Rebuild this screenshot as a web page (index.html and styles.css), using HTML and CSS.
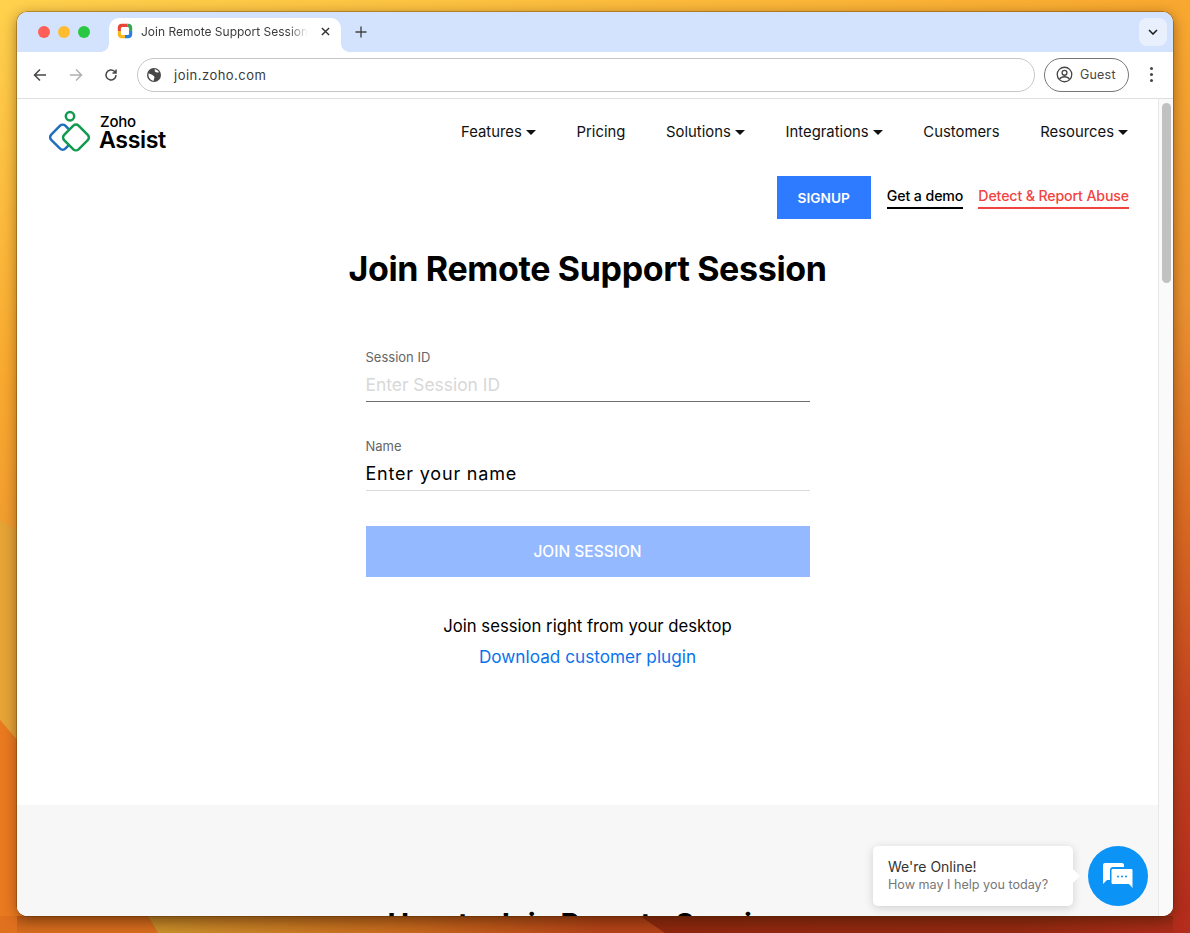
FILE: index.html
```html
<!DOCTYPE html>
<html lang="en">
<head>
<meta charset="utf-8">
<title>Join Remote Support Session</title>
<link rel="stylesheet" href="styles.css">
</head>
<body>
<div class="desktop">
  <svg class="wallpaper" viewBox="0 0 1190 933" preserveAspectRatio="none" aria-hidden="true">
    <defs>
      <linearGradient id="wall" gradientUnits="userSpaceOnUse" x1="0" y1="0" x2="382" y2="1190">
        <stop offset="0" stop-color="#ffd24d"/>
        <stop offset="0.29" stop-color="#f9a92f"/>
        <stop offset="0.52" stop-color="#ea9130"/>
        <stop offset="0.67" stop-color="#dc6e22"/>
        <stop offset="0.825" stop-color="#c4451f"/>
        <stop offset="0.98" stop-color="#b52d1c"/>
      </linearGradient>
      <linearGradient id="gold" gradientUnits="userSpaceOnUse" x1="145" y1="925" x2="600" y2="925">
        <stop offset="0" stop-color="#d2982e"/>
        <stop offset="0.55" stop-color="#d0701f"/>
        <stop offset="1" stop-color="#bb4519"/>
      </linearGradient>
      <linearGradient id="dark" gradientUnits="userSpaceOnUse" x1="640" y1="925" x2="1190" y2="925">
        <stop offset="0" stop-color="#94270f"/>
        <stop offset="0.7" stop-color="#9a2a12"/>
        <stop offset="1" stop-color="#b52d1c"/>
      </linearGradient>
      <linearGradient id="edge" x1="0" y1="0" x2="0" y2="1">
        <stop offset="0" stop-color="#3c1900" stop-opacity=".25"/>
        <stop offset="1" stop-color="#3c1900" stop-opacity=".05"/>
      </linearGradient>
    </defs>
    <rect width="1190" height="933" fill="url(#wall)"/>
    <polygon points="0,520 17,530 17,740 0,720" fill="#e6a437"/>
    <polygon points="0,720 17,740 150,916 0,933" fill="#ea7a20"/>
    <polygon points="0,916 148,916 158,933 0,933" fill="#e0711f"/>
    <polygon points="148,916 640,916 665,933 158,933" fill="url(#gold)"/>
    <polygon points="640,916 1173,916 1190,933 665,933" fill="url(#dark)"/>
    <rect x="17" y="916" width="1156" height="17" fill="url(#edge)"/>
  </svg>
  <div class="window">
    <div class="tabstrip">
      <div class="lights">
        <span class="light light-red"></span>
        <span class="light light-yellow"></span>
        <span class="light light-green"></span>
      </div>
      <div class="tab">
        <svg class="favicon" viewBox="0 0 16 16" aria-hidden="true">
          <path d="M4.6 .8H10.6L10 3.9H5.6C4.6 3.9 3.9 4.6 3.9 5.6V8.6L.8 8V4.6C.8 2.5 2.5 .8 4.6 .8Z" fill="#e8453c"/>
          <path d="M10.6 .8H11.4C13.5 .8 15.2 2.5 15.2 4.6V8L12.1 8.4V5.6C12.1 4.6 11.4 3.9 10.4 3.9H10Z" fill="#34a853"/>
          <path d="M15.2 8V11.4C15.2 13.5 13.5 15.2 11.4 15.2H7.6L8 12.1H10.4C11.4 12.1 12.1 11.4 12.1 10.4V8Z" fill="#2b7de0"/>
          <path d="M.8 8H3.9V10.4C3.9 11.4 4.6 12.1 5.6 12.1H8V15.2H4.6C2.5 15.2 .8 13.5 .8 11.4Z" fill="#f5b81e"/>
        </svg>
        <span class="tab-title">Join Remote Support Session</span>
        <svg class="tab-close" viewBox="0 0 10 10" aria-hidden="true"><path d="M1 1L9 9M9 1L1 9"/></svg>
      </div>
      <svg class="newtab" viewBox="0 0 12 12" aria-hidden="true"><path d="M6 .5V11.5M.5 6H11.5"/></svg>
      <div class="tab-menu">
        <svg viewBox="0 0 10 6" aria-hidden="true"><path d="M1 1L5 5L9 1"/></svg>
      </div>
    </div>
    <div class="toolbar">
      <svg class="tool" viewBox="0 0 14 14" aria-hidden="true"><path d="M13 7H2M7 1.5L1.5 7L7 12.5"/></svg>
      <svg class="tool tool-off" viewBox="0 0 14 14" aria-hidden="true"><path d="M1 7H12M7 1.5L12.5 7L7 12.5"/></svg>
      <svg class="tool tool-reload" viewBox="0 0 14 14" aria-hidden="true"><path d="M12 7A5 5 0 1 1 10.4 3.3L12 5M12 1.5V5H8.5"/></svg>
      <div class="omnibox">
        <svg class="globe" viewBox="0 0 14 14" aria-hidden="true">
          <circle cx="7" cy="7" r="7" fill="#474747"/>
          <path d="M1.5 5.5C3 6 5 6 6 7.5C7.5 8 8 9.5 7 11L6.5 13C4 12.5 2 10.5 1.5 8Z" fill="#fff"/>
          <path d="M7.5 1.2C9.5 1.5 11 2.5 12 4C10.5 5 9 4.5 8 3.5Z" fill="#fff"/>
        </svg>
        <span class="url">join.zoho.com</span>
      </div>
      <div class="profile">
        <svg class="avatar" viewBox="0 0 18 18" aria-hidden="true">
          <circle cx="9" cy="9" r="7.7"/>
          <circle cx="9" cy="7.2" r="2.6"/>
          <path d="M3.8 14C5 12 7 11.4 9 11.4S13 12 14.2 14"/>
        </svg>
        <span>Guest</span>
      </div>
      <div class="kebab"><i></i><i></i><i></i></div>
    </div>
    <div class="viewport">
      <div class="page">
        <header class="nav">
          <a class="logo">
            <svg class="logo-mark" viewBox="0 0 44 44" aria-hidden="true">
              <circle class="mark-green" cx="22" cy="6" r="4"/>
              <rect class="mark-blue" x="5.5" y="16.5" width="19" height="19" rx="3.5" transform="rotate(45 15 26)"/>
              <rect class="mark-green mark-fill" x="18" y="16.5" width="19.5" height="19.5" rx="3.5" transform="rotate(45 27.7 26.2)"/>
            </svg>
            <span class="logo-text"><span class="logo-zoho">Zoho</span><span class="logo-assist">Assist</span></span>
          </a>
          <nav class="menu">
            <a class="menu-item caret">Features</a>
            <a class="menu-item">Pricing</a>
            <a class="menu-item caret">Solutions</a>
            <a class="menu-item caret">Integrations</a>
            <a class="menu-item">Customers</a>
            <a class="menu-item caret">Resources</a>
          </nav>
        </header>
        <div class="actions">
          <a class="signup">SIGNUP</a>
          <a class="action-link">Get a demo</a>
          <a class="action-link action-abuse">Detect &amp; Report Abuse</a>
        </div>
        <main class="join">
          <h1 class="join-title">Join Remote Support Session</h1>
          <form class="form">
            <div class="field">
              <label class="field-label">Session ID</label>
              <div class="field-value field-placeholder field-active">Enter Session ID</div>
            </div>
            <div class="field">
              <label class="field-label">Name</label>
              <div class="field-value">Enter your name</div>
            </div>
            <div class="submit">JOIN SESSION</div>
          </form>
          <p class="plugin-text">Join session right from your desktop</p>
          <a class="plugin-link">Download customer plugin</a>
        </main>
        <section class="howto">
          <h2 class="howto-title">How to Join Remote Session</h2>
        </section>
        <div class="chat">
          <div class="chat-bubble">
            <div class="chat-title">We're Online!</div>
            <div class="chat-sub">How may I help you today?</div>
          </div>
          <div class="chat-button">
            <svg viewBox="0 0 32 28" aria-hidden="true">
              <path d="M3 1H20C21.1 1 22 1.9 22 3V5H11C9.3 5 8 6.3 8 8V18H5L1 22V3C1 1.9 1.9 1 3 1Z" fill="#fff"/>
              <path d="M11 6.5H29C30.1 6.5 31 7.4 31 8.5V27L27 22.5H11C9.9 22.5 9 21.6 9 20.5V8.5C9 7.4 9.9 6.5 11 6.5Z" fill="#fff" stroke="#0b93f6" stroke-width="1"/>
              <circle cx="16" cy="14.5" r="1" fill="#0b93f6"/>
              <circle cx="20" cy="14.5" r="1" fill="#0b93f6"/>
              <circle cx="24" cy="14.5" r="1" fill="#0b93f6"/>
            </svg>
          </div>
        </div>
      </div>
      <div class="scrollbar"><div class="scroll-thumb"></div></div>
    </div>
  </div>
</div>
</body>
</html>
```
FILE: styles.css
```css
* { box-sizing: border-box; }
html, body { margin: 0; padding: 0; height: 100%; overflow: hidden; }
body { font-family: Inter, "Liberation Sans", sans-serif; color: #000; }
.desktop { position: relative; width: 1190px; height: 933px; padding: 12px 17px 17px; overflow: hidden; }
.wallpaper { position: absolute; inset: 0; width: 100%; height: 100%; }
.window { position: relative; width: 1156px; height: 904px; border-radius: 10px; overflow: hidden; background: #fff; display: flex; flex-direction: column; box-shadow: 0 0 0 .5px rgba(70,40,0,.6), 0 3px 14px rgba(60,25,0,.5); }

.tabstrip { height: 40px; flex: none; background: #d3e3fd; display: flex; align-items: flex-end; position: relative; }
.lights { display: flex; gap: 8px; padding: 0 0 14px 21px; width: 92px; }
.light { width: 12px; height: 12px; border-radius: 50%; }
.light-red { background: #ff5f57; }
.light-yellow { background: #febc2e; }
.light-green { background: #28c840; }
.tab { width: 232px; height: 34px; background: #fff; border-radius: 10px 10px 0 0; display: flex; align-items: center; padding: 0 10px 8px 8px; position: relative; }
.tab::before, .tab::after { content: ""; position: absolute; bottom: 0; width: 8px; height: 8px; background: radial-gradient(circle at 0 0, #d3e3fd 7.5px, #fff 8px); }
.tab::before { left: -8px; }
.tab::after { right: -8px; background: radial-gradient(circle at 100% 0, #d3e3fd 7.5px, #fff 8px); }
.favicon { width: 16px; height: 16px; flex: none; }
.tab-title { margin: 2px 0 0 8px; width: 167px; overflow: hidden; white-space: nowrap; font-size: 12px; line-height: 16px; color: #3c3c3c; -webkit-mask-image: linear-gradient(90deg, #000 88%, transparent); mask-image: linear-gradient(90deg, #000 88%, transparent); }
.tab-close { width: 9px; height: 9px; margin: 1px 0 0 13px; flex: none; fill: none; stroke: #333; stroke-width: 1.6; }
.newtab { width: 12px; height: 12px; margin: 0 0 14px 14px; fill: none; stroke: #444; stroke-width: 1.4; }
.tab-menu { margin-left: auto; margin-right: 6px; margin-bottom: 6px; width: 28px; height: 28px; border-radius: 8px; background: #e9f0fd; display: flex; align-items: center; justify-content: center; }
.tab-menu svg { width: 10px; height: 6px; fill: none; stroke: #1f1f1f; stroke-width: 1.6; }

.toolbar { height: 47px; flex: none; background: #fff; border-bottom: 1px solid #dfdfdf; display: flex; align-items: center; padding: 0 0 1px 16px; }
.tool { width: 14px; height: 14px; margin-right: 22px; flex: none; fill: none; stroke: #474747; stroke-width: 1.5; }
.tool-off { stroke: #b0b0b0; margin-right: 21px; }
.tool-reload { margin-right: 20px; }
.omnibox { width: 898px; height: 34px; border: 1px solid #c4c7c5; border-radius: 17px; display: flex; align-items: center; padding-left: 9px; margin-left: -1px; }
.globe { width: 14px; height: 14px; flex: none; }
.url { margin-left: 13px; font-size: 13px; letter-spacing: .48px; color: #3a3a3a; }
.profile { margin-left: 9px; width: 85px; height: 34px; border: 1px solid #747775; border-radius: 17px; display: flex; align-items: center; gap: 7px; padding-left: 11px; font-size: 12.5px; color: #474747; letter-spacing: .2px; }
.avatar { width: 17px; height: 17px; fill: none; stroke: #474747; stroke-width: 1.4; }
.kebab { margin-left: 21px; display: flex; flex-direction: column; gap: 3px; }
.kebab i { width: 3px; height: 3px; border-radius: 50%; background: #474747; display: block; }

.viewport { flex: 1; display: flex; min-height: 0; }
.page { position: relative; width: 1141px; height: 817px; flex: none; overflow: hidden; background: #fff; }
.scrollbar { flex: 1; border-left: 1px solid #e8e8e8; background: #fafafa; padding: 4px 2px 0 3px; }
.scroll-thumb { width: 9px; height: 180px; border-radius: 5px; background: #c1c1c1; }

.nav { height: 66px; display: flex; align-items: center; justify-content: space-between; padding: 0 30px; }
.logo { display: flex; align-items: center; gap: 6px; }
.logo-mark { width: 46px; height: 46px; margin-top: 1px; flex: none; fill: none; stroke-width: 2.4; }
.mark-green { stroke: #129a50; }
.mark-blue { stroke: #1f6fbe; }
.mark-fill { fill: #fff; }
.logo-text { display: flex; flex-direction: column; }
.logo-zoho { font-size: 15px; font-weight: 500; line-height: 16px; letter-spacing: -.2px; margin: 2px 0 -2px 1px; }
.logo-assist { font-size: 23.2px; font-weight: 600; line-height: 24px; letter-spacing: -.4px; }
.menu { display: flex; gap: 40.7px; }
.menu-item { font-size: 14.85px; color: #111; white-space: nowrap; }
.caret::after { content: ""; display: inline-block; width: 0; height: 0; margin-left: 4px; vertical-align: 2px; border: 5px solid transparent; border-top-color: #111; border-bottom-width: 0; }

.actions { display: flex; justify-content: flex-end; align-items: center; gap: 15px; padding-right: 29px; margin-top: 11px; height: 43px; }
.signup { width: 94px; height: 43px; margin-right: 1px; background: #2f7bff; color: #fff; font-size: 13.7px; font-weight: 600; display: flex; align-items: center; justify-content: center; }
.action-link { font-size: 14.2px; font-weight: 500; color: #000; padding-bottom: 2px; border-bottom: 2px solid #000; line-height: 18px; letter-spacing: -.1px; margin-top: 1px; }
.action-abuse { color: #f2443f; border-bottom-color: #f2443f; letter-spacing: -.15px; }

.join { display: flex; flex-direction: column; align-items: center; }
.join-title { margin: 26px 0 0; font-size: 34px; line-height: 48px; font-weight: 700; letter-spacing: -.35px; }
.form { width: 444px; margin-top: 54px; }
.field { height: 89px; }
.field-label { display: block; font-size: 13px; line-height: 20px; color: #666; }
.field-value { height: 35px; font-size: 18px; line-height: 36px; letter-spacing: .8px; border-bottom: 1px solid #dcdcdc; }
.field-placeholder { letter-spacing: 0; color: #d8d8d8; font-size: 17.4px; }
.field-active { border-bottom-color: #6f6f6f; }
.submit { height: 51px; margin-top: 1px; background: #94b9ff; color: #fff; font-size: 15.5px; font-weight: 500; display: flex; align-items: center; justify-content: center; }
.plugin-text { margin: 38px 0 0; font-size: 16.7px; line-height: 22px; }
.plugin-link { margin-top: 9px; font-size: 17.2px; line-height: 22px; color: #0a73eb; }

.howto { position: absolute; left: 0; right: 0; top: 706px; height: 200px; background: #f7f7f7; text-align: center; }
.howto-title { margin: 101px 0 0; font-size: 29px; line-height: 36px; font-weight: 700; }

.chat { position: absolute; left: 856px; top: 747px; display: flex; align-items: center; gap: 15px; }
.chat-bubble { position: relative; width: 200px; height: 60px; background: #fff; border-radius: 5px; box-shadow: 0 2px 10px rgba(0,0,0,.16); padding: 12px 15px; }
.chat-bubble::after { content: ""; position: absolute; right: -5px; top: 25px; width: 10px; height: 10px; background: #fff; transform: rotate(45deg); }
.chat-title { font-size: 14px; line-height: 18px; color: #333; }
.chat-sub { font-size: 12.6px; line-height: 18px; color: #777; white-space: nowrap; }
.chat-button { width: 60px; height: 60px; border-radius: 50%; background: #0b93f6; display: flex; align-items: center; justify-content: center; }
.chat-button svg { width: 32px; height: 28px; }
```
